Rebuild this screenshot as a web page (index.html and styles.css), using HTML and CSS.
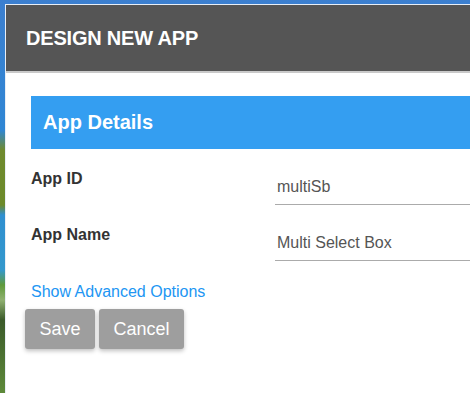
FILE: index.html
```html
<!DOCTYPE html>
<html lang="en">
<head>
    <meta charset="UTF-8">
    <meta name="viewport" content="width=device-width, initial-scale=1.0">
    <title>Design New App</title>
    <link rel="stylesheet" href="styles.css">
</head>
<body>
    <div class="dialog">
        <div class="dialog-header">
            <h1>DESIGN NEW APP</h1>
        </div>

        <div class="dialog-body">
            <h2 class="section-title">App Details</h2>

            <form id="new-app-form">
                <div class="form-row">
                    <label for="app_id">App ID</label>
                    <input type="text" id="app_id" name="app_id" value="multiSb">
                </div>

                <div class="form-row">
                    <label for="app_name">App Name</label>
                    <input type="text" id="app_name" name="app_name" value="Multi Select Box">
                </div>

                <a href="#" class="advanced-link">Show Advanced Options</a>

                <!-- Save / Cancel -->
                <div class="actions">
                    <button type="submit">Save</button>
                    <button type="button">Cancel</button>
                </div>
            </form>
        </div>
    </div>
</body>
</html>
```

FILE: styles.css
```css
html, body {
    margin: 0;
    padding: 0;
    height: 100%;
    overflow: hidden;
}
body {
    font-family: "Liberation Sans", Arial, sans-serif;
    /* landscape wallpaper peeking around the dialog */
    background: linear-gradient(to bottom,
        #3c7fcf 0px, #2f86d4 130px,
        #6f8a2e 150px, #6c8a2a 205px,
        #2f8fd0 215px, #3398cc 270px,
        #5f9a3a 285px, #8fb070 300px,
        #3b5a2a 320px, #5e8a3a 393px);
}
.dialog {
    margin: 4px 0 0 5px;
    height: 100%;
    background: #ffffff;
    border-left: 1px solid #e8eef6;
    border-top: 1px solid #e8eef6;
}
.dialog-header {
    background: #555555;
    height: 66px;
    border-bottom: 2px solid #c9c9c9;
    display: flex;
    align-items: center;
    padding-left: 20px;
}
.dialog-header h1 {
    margin: 0;
    color: #ffffff;
    font-size: 20px;
    font-weight: bold;
    letter-spacing: -0.2px;
}
.dialog-body {
    padding: 23px 0 0 25px;
}
.section-title {
    margin: 0;
    height: 53px;
    display: flex;
    align-items: center;
    padding-left: 12px;
    background: #349ef1;
    color: #ffffff;
    font-size: 20px;
    font-weight: bold;
}
#new-app-form {
    padding-top: 20px;
}
.form-row {
    display: flex;
    align-items: flex-start;
    height: 56px;
}
label {
    width: 244px;
    flex-shrink: 0;
    line-height: 20px;
    font-size: 16px;
    font-weight: bold;
    color: #333333;
}
input {
    flex: 1;
    min-width: 0;
    margin-top: 1px;
    height: 35px;
    box-sizing: border-box;
    padding: 0 2px;
    border: none;
    border-bottom: 1px solid #ababab;
    font-family: "Liberation Sans", Arial, sans-serif;
    font-size: 16px;
    color: #555555;
    outline: none;
}
.advanced-link {
    display: block;
    margin-top: 1px;
    line-height: 20px;
    font-size: 16px;
    color: #2196f3;
    text-decoration: none;
}
.advanced-link:hover {
    text-decoration: underline;
}
.actions {
    display: flex;
    gap: 4px;
    margin: 7px 0 0 -6px;
}
button {
    height: 40px;
    padding: 0 14.5px;
    background: #9e9e9e;
    color: #ffffff;
    border: none;
    border-radius: 3px;
    font-family: "Liberation Sans", Arial, sans-serif;
    font-size: 18px;
    cursor: pointer;
    box-shadow: 0px 2px 4px rgba(0, 0, 0, 0.25);
}
button:hover {
    background: #8a8a8a;
}
```
